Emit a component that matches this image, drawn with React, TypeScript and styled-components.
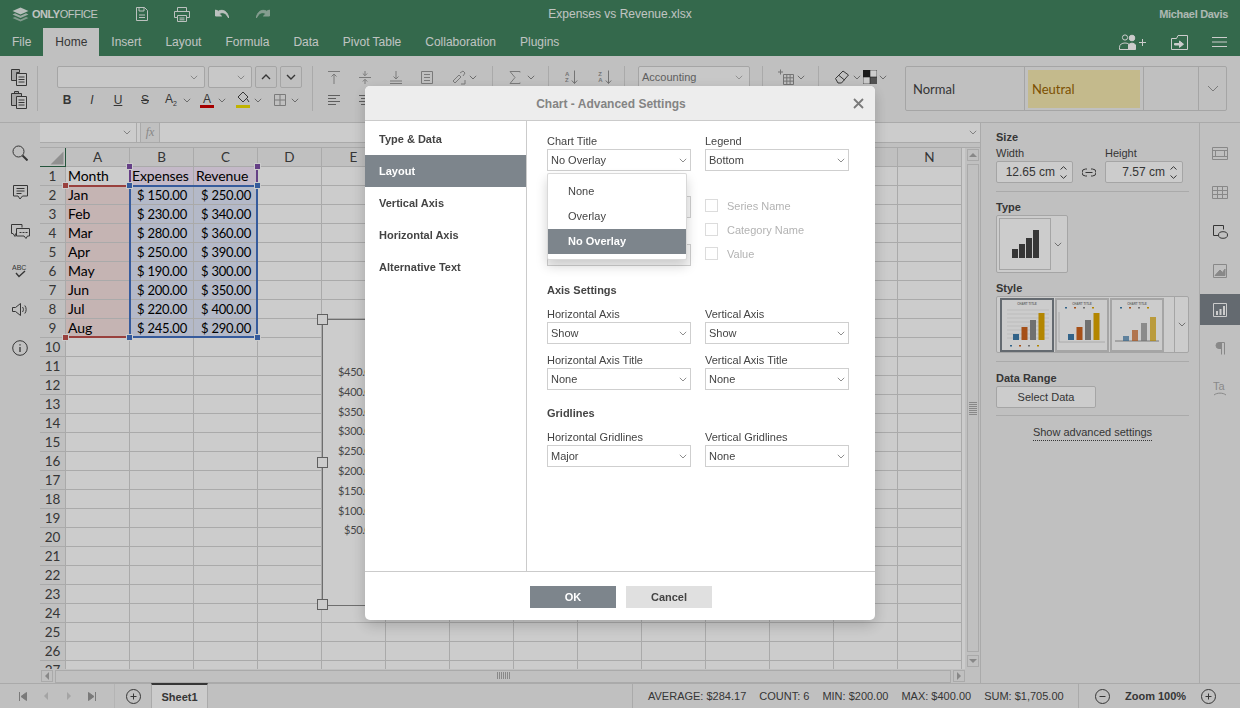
import React from "react";
import styled, { createGlobalStyle } from "styled-components";

const GlobalStyle = createGlobalStyle`
  html, body { margin: 0; padding: 0; height: 100%; overflow: hidden; }
  body { font-family: "Liberation Sans", Arial, sans-serif; font-size: 11px; color: #444; }
  * { box-sizing: border-box; }
`;

const GREEN = "#41845f";
const PANEL = "#f1f1f1";
const LINE = "#d5d5d5";
const ACCENT = "#7d858c";

const Page = styled.div`
  width: 1240px;
  height: 708px;
  display: flex;
  flex-direction: column;
  background: ${PANEL};
  overflow: hidden;
`;

/* ---------- icons ---------- */
const Svg = styled.svg<{ $o?: number }>`
  display: block;
  flex-shrink: 0;
  fill: none;
  stroke: currentColor;
  stroke-width: 1;
  opacity: ${(p) => p.$o ?? 1};
`;

const Ico = ({ w = 20, h = 20, o, children }: { w?: number; h?: number; o?: number; children: React.ReactNode }) => (
  <Svg width={w} height={h} viewBox={`0 0 ${w} ${h}`} $o={o}>
    {children}
  </Svg>
);

const Chev = ({ o }: { o?: number }) => (
  <Ico w={8} h={5} o={o}>
    <path d="M.8.8 4 4l3.2-3.2" />
  </Ico>
);

const Logo = () => (
  <Ico w={17} h={15}>
    <path d="M8.5.5 16.5 4l-8 3.5L.5 4z" fill="#fff" stroke="none" opacity=".95" />
    <path d="M3 6.3.5 7.5l8 3.6 8-3.6L14 6.3 8.5 8.8z" fill="#fff" stroke="none" opacity=".75" />
    <path d="M3 9.9.5 11l8 3.6 8-3.6-2.5-1.1-5.5 2.5z" fill="#fff" stroke="none" opacity=".55" />
  </Ico>
);

const SaveIcon = () => (
  <Ico w={14} h={14}>
    <path d="M1.5.5h8l3 3v10h-11z" />
    <path d="M4 .5v3.5h5V.5M4 8h6M4 10.5h6" />
  </Ico>
);
const PrintIcon = () => (
  <Ico w={16} h={15}>
    <path d="M3.5 4.5v-4h9v4M3.5 10.5h-3v-6h15v6h-3" />
    <path d="M3.5 8.5h9v6h-9zM5.5 11h5M5.5 12.8h5" />
  </Ico>
);
const UndoIcon = ({ flip, o }: { flip?: boolean; o?: number }) => (
  <Ico w={15} h={10} o={o}>
    <g transform={flip ? "translate(15 0) scale(-1 1)" : undefined}>
      <path d="M.5 1v6h6L4.2 4.8C7.5 2.5 11 3.6 13.6 9 13.2 3.6 8.6-.6 3.4 2.2z" fill="currentColor" />
    </g>
  </Ico>
);
const AddUserIcon = () => (
  <Ico w={28} h={16}>
    <circle cx="6" cy="3.5" r="2.6" />
    <path d="M.5 15.5v-2.2c0-3 2.6-4.3 5.5-4.3 1.5 0 2.8.3 3.8 1v5.5z" />
    <circle cx="13" cy="4" r="2.8" fill="currentColor" />
    <path d="M9.5 15.5V11c.8-1.2 2-1.8 3.5-1.8 1.5 0 2.7.6 3.5 1.8v4.5z" fill="currentColor" />
    <path d="M20 8.5h7M23.5 5v7" />
  </Ico>
);
const FolderIcon = () => (
  <Ico w={17} h={15}>
    <path d="M.5 3.5h5l1.5-3h9.5v14H.5z" />
    <path d="M3.5 8.5h5V6l4 3.2-4 3.2V10h-5z" fill="currentColor" />
  </Ico>
);
const MenuIcon = () => (
  <Ico w={15} h={12}>
    <path d="M0 1.5h15M0 6h15M0 10.5h15" />
  </Ico>
);

const CopyIcon = () => (
  <Ico w={16} h={17}>
    <path d="M.5.5h8v3h-3v8h-5z" fill="#cfcfcf" />
    <path d="M5.5 4.5h10v12h-10z" fill="#f1f1f1" />
    <path d="M7.5 8h6M7.5 10.5h6M7.5 13h6" />
  </Ico>
);
const PasteIcon = () => (
  <Ico w={16} h={18}>
    <path d="M.5 2.5h10v12H.5zM3.5 2.5v-2h4v2" fill="#cfcfcf" />
    <path d="M5.5 5.5h10v12h-10z" fill="#f1f1f1" />
    <path d="M7.5 9h6M7.5 11.5h6M7.5 14h6" />
  </Ico>
);
const LineIcon = ({ d, o = 0.5 }: { d: string; o?: number }) => (
  <Ico w={16} h={15} o={o}>
    <path d={d} />
  </Ico>
);
const SortWrap = styled.div`
  display: flex;
  align-items: center;
  gap: 2px;
  opacity: 0.55;
`;
const SortText = styled.span`
  font-size: 6px;
  line-height: 6px;
  font-weight: bold;
`;
const SortIcon = ({ a, b }: { a: string; b: string }) => (
  <SortWrap>
    <SortText>
      {a}
      <br />
      {b}
    </SortText>
    <Ico w={7} h={15}>
      <path d="M3.5.5v13M.8 10.5l2.7 3 2.700-3" />
    </Ico>
  </SortWrap>
);

/* ---------- header ---------- */
const Header = styled.header`
  background: ${GREEN};
  height: 56px;
  color: #fff;
  flex-shrink: 0;
`;
const TitleBar = styled.div`
  height: 28px;
  display: grid;
  grid-template-columns: 1fr auto 1fr;
  align-items: center;
  padding: 0 12px;
`;
const LeftTools = styled.div`
  display: flex;
  align-items: center;
`;
const Brand = styled.div`
  display: flex;
  align-items: center;
  gap: 3px;
  width: 86px;
  font-size: 11px;
  opacity: 0.92;
  letter-spacing: -0.45px;
`;
const BrandStrong = styled.b`
  font-weight: bold;
`;
const QuickTools = styled.div`
  display: flex;
  align-items: center;
  margin-left: 24px;
`;
const QuickTool = styled.div`
  width: 40px;
  height: 20px;
  display: flex;
  align-items: center;
  justify-content: center;
  opacity: 0.9;
`;
const DocTitle = styled.div`
  font-size: 12px;
  text-align: center;
  opacity: 0.92;
`;
const UserName = styled.div`
  justify-self: end;
  font-size: 11px;
  font-weight: bold;
  letter-spacing: -0.3px;
  opacity: 0.8;
`;
const TabBar = styled.nav`
  height: 28px;
  display: flex;
  align-items: stretch;
`;
const Tab = styled.div<{ $active?: boolean }>`
  padding: 0 12px;
  display: flex;
  align-items: center;
  font-size: 12px;
  color: ${(p) => (p.$active ? "#444" : "#fff")};
  background: ${(p) => (p.$active ? PANEL : "transparent")};
  opacity: ${(p) => (p.$active ? 1 : 0.92)};
`;
const TabActions = styled.div`
  margin-left: auto;
  display: flex;
  align-items: center;
  gap: 24px;
  padding-right: 13px;
`;

/* ---------- toolbar ---------- */
const Toolbar = styled.div`
  height: 67px;
  flex-shrink: 0;
  background: ${PANEL};
  border-bottom: 1px solid ${LINE};
  display: flex;
  padding-top: 10px;
  color: #444;
`;
const ToolGroup = styled.div<{ $w: number; $pad?: number; $last?: boolean }>`
  width: ${(p) => p.$w}px;
  height: 45px;
  padding-left: ${(p) => p.$pad ?? 0}px;
  border-right: ${(p) => (p.$last ? "none" : `1px solid ${LINE}`)};
  display: flex;
  flex-direction: column;
  justify-content: space-between;
  flex-shrink: 0;
`;
const ToolRow = styled.div<{ $gap?: number; $center?: boolean }>`
  height: 22px;
  display: flex;
  align-items: center;
  gap: ${(p) => p.$gap ?? 0}px;
  justify-content: ${(p) => (p.$center ? "center" : "flex-start")};
`;
const ToolBtn = styled.div<{ $w?: number; $mr?: number; $ml?: number }>`
  width: ${(p) => p.$w ?? 20}px;
  margin-right: ${(p) => p.$mr ?? 0}px;
  margin-left: ${(p) => p.$ml ?? 0}px;
  height: 20px;
  display: flex;
  align-items: center;
  justify-content: center;
  flex-shrink: 0;
`;
const BarCombo = styled.div<{ $w: number; $mr?: number }>`
  width: ${(p) => p.$w}px;
  margin-right: ${(p) => p.$mr ?? 0}px;
  height: 22px;
  background: #fafafa;
  border: 1px solid #cfcfcf;
  border-radius: 2px;
  display: flex;
  align-items: center;
  justify-content: space-between;
  padding: 0 6px 0 3px;
  font-size: 11px;
  color: #777;
  flex-shrink: 0;
`;
const StepBtn = styled.div<{ $mr?: number }>`
  width: 22px;
  margin-right: ${(p) => p.$mr ?? 0}px;
  height: 22px;
  border: 1px solid #cfcfcf;
  border-radius: 2px;
  display: flex;
  align-items: center;
  justify-content: center;
  flex-shrink: 0;
`;
const GlyphB = styled.span<{ $i?: boolean; $u?: boolean; $s?: boolean }>`
  font-size: 12px;
  font-weight: ${(p) => (p.$i || p.$u || p.$s ? "normal" : "bold")};
  font-style: ${(p) => (p.$i ? "italic" : "normal")};
  text-decoration: ${(p) => (p.$u ? "underline" : p.$s ? "line-through" : "none")};
`;
const SubGlyph = styled.span`
  font-size: 12px;
`;
const Sub = styled.sub`
  font-size: 7px;
`;
const ColorGlyph = styled.span<{ $c: string }>`
  display: inline-block;
  width: 14px;
  text-align: center;
  line-height: 12px;
  font-size: 12px;
  border-bottom: 3px solid ${(p) => p.$c};
`;
const StyleGallery = styled.div`
  width: 322px;
  height: 45px;
  margin-left: 17px;
  border: 1px solid #cfcfcf;
  border-radius: 2px;
  display: grid;
  grid-template-columns: 119px 119px 55px 1fr;
  font-family: Lato, "Liberation Sans", sans-serif;
  font-size: 13px;
  flex-shrink: 0;
`;
const StyleCell = styled.div<{ $center?: boolean }>`
  border-right: 1px solid #cfcfcf;
  display: flex;
  align-items: center;
  justify-content: ${(p) => (p.$center ? "center" : "flex-start")};
  padding-left: ${(p) => (p.$center ? 0 : 7)}px;
  color: #444;
  &:last-child {
    border-right: none;
  }
`;
const NeutralChip = styled.div`
  flex: 1;
  height: 38px;
  margin: 0 3px 0 -4px;
  background: #f5e9b0;
  color: #9c6500;
  display: flex;
  align-items: center;
  padding-left: 4px;
`;

/* ---------- work area ---------- */
const Work = styled.div`
  flex: 1;
  display: flex;
  min-height: 0;
`;
const Rail = styled.aside<{ $right?: boolean }>`
  width: 40px;
  flex-shrink: 0;
  display: flex;
  flex-direction: column;
  align-items: center;
  padding-top: ${(p) => (p.$right ? 11 : 20)}px;
  gap: ${(p) => (p.$right ? 0 : 19)}px;
  background: ${PANEL};
`;
const RailBtn = styled.div<{ $active?: boolean; $off?: boolean }>`
  width: 100%;
  height: ${(p) => (p.$active ? 31 : 39)}px;
  margin: ${(p) => (p.$active ? "4px 0" : "0")};
  flex-shrink: 0;
  display: flex;
  align-items: center;
  justify-content: center;
  color: ${(p) => (p.$active ? "#fff" : "#444")};
  background: ${(p) => (p.$active ? ACCENT : "transparent")};
  opacity: ${(p) => (p.$off ? 0.4 : 1)};
`;
const LeftRailIcon = styled.div`
  height: 20px;
  display: flex;
  align-items: center;
  justify-content: center;
  color: #444;
`;
const Center = styled.main`
  width: 941px;
  display: flex;
  flex-direction: column;
  flex-shrink: 0;
  border-right: 1px solid ${LINE};
  background: #fff;
`;
const FormulaBar = styled.div`
  height: 20px;
  display: flex;
  border-bottom: 1px solid ${LINE};
  background: #fff;
`;
const NameBox = styled.div`
  width: 97px;
  display: flex;
  align-items: center;
  justify-content: flex-end;
  padding-right: 5px;
  color: #666;
  border-right: 1px solid ${LINE};
`;
const FxBox = styled.div`
  width: 20px;
  margin-left: 3px;
  background: ${PANEL};
  border: 1px solid ${LINE};
  border-width: 0 1px;
  display: flex;
  align-items: center;
  justify-content: center;
  font-family: "Liberation Serif", serif;
  font-style: italic;
  color: #aaa;
  font-size: 12px;
`;
const FormulaInput = styled.div`
  flex: 1;
  display: flex;
  align-items: center;
  justify-content: flex-end;
  padding-right: 3px;
  color: #666;
`;
const FormulaStrip = styled.div`
  height: 5px;
  background: ${PANEL};
  border-bottom: 1px solid ${LINE};
`;
const SheetRow = styled.div`
  height: 521px;
  display: flex;
`;
const Sheet = styled.div`
  position: relative;
  width: 926px;
  overflow: hidden;
  font-family: Lato, sans-serif;
  font-size: 14px;
  color: #000;
`;
const gridColumns = "26px repeat(14, 64px)";
const CellGrid = styled.div`
  display: grid;
  grid-template-columns: ${gridColumns};
  grid-auto-rows: 19px;
`;
const OverlayGrid = styled.div`
  position: absolute;
  left: 0;
  top: 0;
  display: grid;
  grid-template-columns: ${gridColumns};
  grid-template-rows: repeat(28, 19px);
`;
const Cell = styled.div<{ $bg?: string; $right?: boolean }>`
  border-right: 1px solid ${LINE};
  border-bottom: 1px solid ${LINE};
  background: ${(p) => p.$bg ?? "#fff"};
  line-height: 18px;
  white-space: nowrap;
  overflow: hidden;
  letter-spacing: ${(p) => (p.$right ? "-0.2px" : "-0.1px")};
  font-size: ${(p) => (p.$right ? 13 : 14)}px;
  padding: ${(p) => (p.$right ? "0 6px 0 0" : "0 0 0 2px")};
  text-align: ${(p) => (p.$right ? "right" : "left")};
`;
const HeadCell = styled.div`
  border-right: 1px solid ${LINE};
  border-bottom: 1px solid ${LINE};
  background: ${PANEL};
  line-height: 18px;
  font-size: 13.5px;
  text-align: center;
  color: #444;
`;
const Corner = styled.div`
  background: ${PANEL};
  border-right: 1px solid #2f6b4c;
  border-bottom: 1px solid #2f6b4c;
  display: flex;
  align-items: flex-end;
  justify-content: flex-end;
  padding: 0 1px 1px 0;
`;
const Range = styled.div<{ $col: string; $row: string; $c: string; $noSides?: boolean }>`
  grid-column: ${(p) => p.$col};
  grid-row: ${(p) => p.$row};
  position: relative;
  margin: -1px 0 0 -1px;
  border: 2px solid ${(p) => p.$c};
  border-left-color: ${(p) => (p.$noSides ? "transparent" : p.$c)};
  border-right-color: ${(p) => (p.$noSides ? "transparent" : p.$c)};
`;
const RangeTop = styled(Range)`
  border-top-color: transparent;
  border-bottom-color: transparent;
`;
const Dot = styled.span<{ $c: string; $x: "l" | "r"; $y: "t" | "b" }>`
  position: absolute;
  width: 7px;
  height: 7px;
  background: ${(p) => p.$c};
  border: 1px solid #fff;
  ${(p) => (p.$x === "l" ? "left: -5px;" : "right: -5px;")}
  ${(p) => (p.$y === "t" ? "top: -5px;" : "bottom: -5px;")}
`;
const ChartFrame = styled.div`
  grid-column: 6 / 14;
  grid-row: 10 / 25;
  position: relative;
  background: #fff;
  border: 1px solid #8a8a8a;
  margin-bottom: -2px;
  display: flex;
  padding: 42px 0 0 15px;
`;
const AxisLabels = styled.div`
  display: flex;
  flex-direction: column;
  align-items: flex-end;
  font-size: 11px;
  letter-spacing: -0.3px;
  color: #595959;
`;
const AxisLabel = styled.div`
  height: 19.8px;
  line-height: 19.8px;
`;
const Grip = styled.span<{ $y: string }>`
  position: absolute;
  left: -6px;
  top: ${(p) => p.$y};
  width: 11px;
  height: 11px;
  margin-top: -6px;
  background: #fff;
  border: 1px solid #777;
`;
const VScroll = styled.div`
  width: 15px;
  background: ${PANEL};
  display: flex;
  flex-direction: column;
  align-items: center;
  padding: 1px 0 2px;
  gap: 3px;
`;
const ScrollBtn = styled.div`
  width: 12px;
  height: 12px;
  border: 1px solid ${LINE};
  display: flex;
  align-items: center;
  justify-content: center;
  flex-shrink: 0;
`;
const VThumb = styled.div`
  flex: 1;
  width: 12px;
  border: 1px solid ${LINE};
  display: flex;
  align-items: center;
  justify-content: center;
`;
const HScroll = styled.div`
  height: 14px;
  background: ${PANEL};
  display: flex;
  align-items: center;
  gap: 2px;
  padding-left: 1px;
  padding-right: 15px;
`;
const HThumb = styled.div`
  flex: 1;
  height: 13px;
  padding-bottom: 1px;
  border: 1px solid ${LINE};
  display: flex;
  align-items: center;
  justify-content: center;
`;
const GripLines = styled.div<{ $v?: boolean }>`
  width: ${(p) => (p.$v ? 13 : 8)}px;
  height: ${(p) => (p.$v ? 7 : 13)}px;
  background: repeating-linear-gradient(
    ${(p) => (p.$v ? "90deg" : "0deg")},
    #aaa 0 1px,
    transparent 1px 2px
  );
`;
const Tri = styled.span<{ $dir: "u" | "d" | "l" | "r" }>`
  width: 0;
  height: 0;
  border: 4px solid transparent;
  ${(p) =>
    p.$dir === "u"
      ? "border-bottom-color: #aaa; border-top-width: 0;"
      : p.$dir === "d"
      ? "border-top-color: #aaa; border-bottom-width: 0;"
      : p.$dir === "l"
      ? "border-right-color: #aaa; border-left-width: 0;"
      : "border-left-color: #aaa; border-right-width: 0;"}
`;

/* ---------- right panel ---------- */
const SidePanel = styled.section`
  width: 219px;
  flex-shrink: 0;
  background: ${PANEL};
  border-right: 1px solid ${LINE};
  padding: 7px 10px 0 15px;
  color: #444;
`;
const PanelTitle = styled.div<{ $mt?: number }>`
  font-weight: bold;
  font-size: 11px;
  line-height: 14px;
  margin-top: ${(p) => p.$mt ?? 0}px;
`;
const SizeRow = styled.div`
  display: grid;
  grid-template-columns: 77px 32px 78px;
  margin-top: 2px;
`;
const SizeLabel = styled.div`
  line-height: 14px;
  margin-bottom: 1px;
`;
const Spinner = styled.div`
  height: 22px;
  background: #fff;
  border: 1px solid #cfcfcf;
  border-radius: 2px;
  display: flex;
  align-items: center;
  justify-content: flex-end;
  gap: 5px;
  padding-right: 5px;
  font-size: 12px;
`;
const SpinArrows = styled.div`
  display: flex;
  flex-direction: column;
  gap: 5px;
`;
const LinkBox = styled.div`
  display: flex;
  align-items: center;
  justify-content: center;
  padding-top: 16px;
`;
const Divider = styled.div<{ $mt: number; $mb: number }>`
  height: 1px;
  background: ${LINE};
  margin: ${(p) => p.$mt}px 0 ${(p) => p.$mb}px;
`;
const TypeBox = styled.div`
  width: 72px;
  height: 58px;
  margin-top: 1px;
  background: #fff;
  border: 1px solid #cfcfcf;
  border-radius: 2px;
  padding: 2px;
  display: flex;
  align-items: center;
`;
const TypeInner = styled.div`
  width: 52px;
  height: 52px;
  border: 1px solid #cfcfcf;
  display: flex;
  align-items: flex-end;
  justify-content: center;
  padding-bottom: 11px;
  gap: 1px;
`;
const TypeBar = styled.span<{ $h: number }>`
  width: 6px;
  height: ${(p) => p.$h}px;
  background: #444;
`;
const TypeCaret = styled.div`
  flex: 1;
  display: flex;
  justify-content: center;
`;
const StyleBox = styled.div`
  height: 57px;
  margin-top: 1px;
  background: #fff;
  border: 1px solid #cfcfcf;
  border-radius: 2px;
  display: flex;
  align-items: center;
  padding-left: 3px;
`;
const Thumb = styled.div<{ $on?: boolean }>`
  width: 54px;
  height: 54px;
  background: #fff;
  border: ${(p) => (p.$on ? `2px solid ${ACCENT}` : "2px solid #cfcfcf")};
  outline: ${(p) => (p.$on ? `1px solid ${ACCENT}` : "none")};
  outline-offset: -1px;
`;
const ThumbList = styled.div`
  flex: 1;
  display: flex;
  gap: 1px;
`;
const StyleCaret = styled.div`
  width: 14px;
  align-self: stretch;
  border-left: 1px solid #cfcfcf;
  display: flex;
  align-items: center;
  justify-content: center;
`;
const SelectData = styled.div`
  width: 100px;
  height: 22px;
  margin-top: 1px;
  background: #fff;
  border: 1px solid #cfcfcf;
  border-radius: 2px;
  display: flex;
  align-items: center;
  justify-content: center;
`;
const AdvancedLink = styled.div`
  text-align: center;
  padding-top: 1px;
`;
const AdvancedText = styled.span`
  display: inline-block;
  line-height: 15px;
  border-bottom: 1px dotted #444;
`;

/* ---------- status bar ---------- */
const StatusBar = styled.footer`
  height: 25px;
  flex-shrink: 0;
  background: ${PANEL};
  border-top: 1px solid ${LINE};
  display: flex;
  align-items: stretch;
  color: #444;
`;
const SheetNav = styled.div`
  width: 115px;
  border-right: 1px solid ${LINE};
  display: grid;
  grid-template-columns: repeat(4, 23px);
  padding-left: 11px;
  align-items: center;
  justify-items: center;
  opacity: 0.5;
`;
const AddSheet = styled.div`
  width: 36px;
  display: flex;
  align-items: center;
  justify-content: center;
`;
const SheetTab = styled.div`
  width: 57px;
  margin-top: -1px;
  background: #fff;
  border-top: 2px solid #444;
  border-left: 1px solid ${LINE};
  border-right: 1px solid ${LINE};
  display: flex;
  align-items: center;
  justify-content: center;
  font-weight: bold;
`;
const Stats = styled.div`
  margin-left: auto;
  width: 447px;
  border-left: 1px solid ${LINE};
  border-right: 1px solid ${LINE};
  display: flex;
  align-items: center;
  gap: 13px;
  padding-left: 15px;
  font-size: 11px;
  white-space: nowrap;
`;
const ZoomBox = styled.div`
  width: 161px;
  display: flex;
  align-items: center;
  padding-left: 16px;
  gap: 15px;
  font-weight: bold;
`;

/* ---------- dialog ---------- */
const Scrim = styled.div`
  position: fixed;
  inset: 0;
  background: rgba(0, 0, 0, 0.2);
  display: flex;
  align-items: center;
  justify-content: center;
  padding-bottom: 2px;
`;
const Dialog = styled.div`
  width: 510px;
  height: 534px;
  background: #fff;
  border-radius: 5px;
  box-shadow: 0 5px 15px rgba(0, 0, 0, 0.2);
  display: flex;
  flex-direction: column;
  overflow: hidden;
`;
const DialogHead = styled.div`
  height: 35px;
  flex-shrink: 0;
  background: #ededed;
  border-bottom: 1px solid #cbcbcb;
  display: flex;
  align-items: center;
  justify-content: center;
  position: relative;
  padding: 2px 18px 0 0;
  font-size: 12px;
  font-weight: bold;
  color: #848484;
`;
const CloseBtn = styled.div`
  position: absolute;
  right: 11px;
  top: 12px;
  color: #7a7a7a;
`;
const DialogBody = styled.div`
  flex: 1;
  display: flex;
  min-height: 0;
`;
const SideNav = styled.div`
  width: 162px;
  flex-shrink: 0;
  border-right: 1px solid #cbcbcb;
  padding-top: 2px;
`;
const NavItem = styled.div<{ $active?: boolean }>`
  height: 32px;
  padding-left: 14px;
  display: flex;
  align-items: center;
  font-weight: bold;
  font-size: 11px;
  background: ${(p) => (p.$active ? ACCENT : "transparent")};
  color: ${(p) => (p.$active ? "#fff" : "#444")};
`;
const Form = styled.div`
  flex: 1;
  padding: 13px 0 0 20px;
  position: relative;
`;
const FormGrid = styled.div<{ $mt?: number }>`
  display: grid;
  grid-template-columns: 144px 144px;
  column-gap: 14px;
  row-gap: 9px;
  margin-top: ${(p) => p.$mt ?? 0}px;
`;
const FieldStack = styled.div`
  display: flex;
  flex-direction: column;
  gap: 11px;
`;
const FieldLabel = styled.div`
  line-height: 14px;
  margin-bottom: 1px;
  color: #444;
`;
const SelectBox = styled.div<{ $off?: boolean }>`
  height: 22px;
  border: 1px solid #cfcfcf;
  background: ${(p) => (p.$off ? "#f7f7f7" : "#fff")};
  display: flex;
  align-items: center;
  justify-content: space-between;
  padding: 0 3px 0 3px;
  color: #444;
`;
const SectionTitle = styled.div<{ $mt: number }>`
  font-weight: bold;
  line-height: 14px;
  margin-top: ${(p) => p.$mt}px;
`;
const CheckColumn = styled.div`
  padding-top: 18px;
  display: flex;
  flex-direction: column;
  gap: 11px;
`;
const CheckRow = styled.div`
  height: 13px;
  display: flex;
  align-items: center;
  gap: 9px;
  color: #b3b3b3;
`;
const CheckBox = styled.span`
  width: 13px;
  height: 13px;
  border: 1px solid #dcdcdc;
`;
const Menu = styled.div`
  position: absolute;
  left: 20px;
  top: 52px;
  width: 140px;
  height: 87px;
  background: #fff;
  border: 1px solid rgba(0, 0, 0, 0.15);
  border-radius: 2px;
  box-shadow: 0 6px 12px rgba(0, 0, 0, 0.18);
  padding: 5px 0;
`;
const MenuItem = styled.div<{ $on?: boolean }>`
  height: 25px;
  padding: 0 0 2px 20px;
  display: flex;
  align-items: center;
  background: ${(p) => (p.$on ? ACCENT : "transparent")};
  color: ${(p) => (p.$on ? "#fff" : "#444")};
  font-weight: ${(p) => (p.$on ? "bold" : "normal")};
`;
const DialogFoot = styled.div`
  height: 49px;
  flex-shrink: 0;
  border-top: 1px solid #cbcbcb;
  display: flex;
  justify-content: center;
  gap: 10px;
  padding: 14px 0 0 2px;
`;
const FootBtn = styled.div<{ $primary?: boolean }>`
  width: 86px;
  height: 22px;
  display: flex;
  align-items: center;
  justify-content: center;
  font-weight: bold;
  background: ${(p) => (p.$primary ? ACCENT : "#e0e0e0")};
  color: ${(p) => (p.$primary ? "#fff" : "#444")};
`;

/* ---------- data ---------- */
const TABS = ["Insert", "Layout", "Formula", "Data", "Pivot Table", "Collaboration", "Plugins"];
const COLS = ["A", "B", "C", "D", "E", "F", "G", "H", "I", "J", "K", "L", "M", "N"];
const ROWS: [string, string, string][] = [
  ["Jan", "$ 150.00", "$ 250.00"],
  ["Feb", "$ 230.00", "$ 340.00"],
  ["Mar", "$ 280.00", "$ 360.00"],
  ["Apr", "$ 250.00", "$ 390.00"],
  ["May", "$ 190.00", "$ 300.00"],
  ["Jun", "$ 200.00", "$ 350.00"],
  ["Jul", "$ 220.00", "$ 400.00"],
  ["Aug", "$ 245.00", "$ 290.00"],
];
const RED_TINT = "#f7e1e0";
const BLUE_TINT = "#e1e8fa";
const PURPLE_TINT = "#f5e8fa";
const AXIS = ["$450.00", "$400.00", "$350.00", "$300.00", "$250.00", "$200.00", "$150.00", "$100.00", "$50.00"];

function renderRow(r: number) {
  const items: React.ReactNode[] = [<HeadCell key="h">{r}</HeadCell>];
  COLS.forEach((_, c) => {
    let text = "";
    let bg: string | undefined;
    let right = false;
    if (r === 1 && c < 3) {
      text = ["Month", "Expenses", "Revenue"][c];
      if (c > 0) bg = PURPLE_TINT;
    } else if (r >= 2 && r <= 9 && c < 3) {
      text = ROWS[r - 2][c];
      bg = c === 0 ? RED_TINT : BLUE_TINT;
      right = c > 0;
    }
    items.push(
      <Cell key={c} $bg={bg} $right={right}>
        {text}
      </Cell>
    );
  });
  return <React.Fragment key={r}>{items}</React.Fragment>;
}

const SERIES = ["#3f7cac", "#d0651f", "#8c8c8c", "#e0a800"];
const ChartThumb = ({ variant }: { variant: 0 | 1 | 2 }) => {
  const heights = variant === 2 ? [5, 11, 18, 24] : [6, 13, 20, 27];
  const base = variant === 2 ? 41 : 40;
  return (
    <svg width="50" height="50" viewBox="0 0 50 50" style={{ display: "block" }}>
      <text x="25" y="4.5" fontSize="3" fontWeight="bold" textAnchor="middle" fill="#888" fontFamily="Liberation Sans">
        CHART TITLE
      </text>
      {variant === 0 &&
        [10, 14, 18, 22, 26, 30, 34, 38].map((y) => <line key={y} x1="5" x2="47" y1={y} y2={y} stroke="#ddd" strokeWidth=".6" />)}
      {variant === 1 && <path d="M2 12v30h46" fill="none" stroke="#ccc" strokeWidth=".8" />}
      {variant === 2 && <line x1="3" x2="47" y1="41" y2="41" stroke="#555" strokeWidth=".6" />}
      {variant !== 0 &&
        SERIES.map((c, i) => <rect key={c} x={8 + i * 9} y="7" width="2" height="1.5" fill={c} />)}
      {heights.map((h, i) => (
        <rect key={i} x={variant === 2 ? 11 + i * 9 : 11 + i * 8.5} y={base - h} width={6} height={h} fill={SERIES[i]} opacity={variant === 2 ? 0.7 : 1} />
      ))}
      {variant === 0 && SERIES.map((c, i) => <rect key={c} x={8 + i * 9} y="45" width="2" height="1.5" fill={c} />)}
    </svg>
  );
};

export default function App() {
  return (
    <>
      <GlobalStyle />
      <Page>
        <Header>
          <TitleBar>
            <LeftTools>
              <Brand>
                <Logo />
                <span>
                  <BrandStrong>ONLY</BrandStrong>OFFICE
                </span>
              </Brand>
              <QuickTools>
                <QuickTool><SaveIcon /></QuickTool>
                <QuickTool><PrintIcon /></QuickTool>
                <QuickTool><UndoIcon /></QuickTool>
                <QuickTool><UndoIcon flip o={0.6} /></QuickTool>
              </QuickTools>
            </LeftTools>
            <DocTitle>Expenses vs Revenue.xlsx</DocTitle>
            <UserName>Michael Davis</UserName>
          </TitleBar>
          <TabBar>
            <Tab>File</Tab>
            <Tab $active>Home</Tab>
            {TABS.map((t) => (
              <Tab key={t}>{t}</Tab>
            ))}
            <TabActions>
              <AddUserIcon />
              <FolderIcon />
              <MenuIcon />
            </TabActions>
          </TabBar>
        </Header>

        <Toolbar>
          <ToolGroup $w={38}>
            <ToolRow $center><CopyIcon /></ToolRow>
            <ToolRow $center><PasteIcon /></ToolRow>
          </ToolGroup>
          <ToolGroup $w={275} $pad={19}>
            <ToolRow>
              <BarCombo $w={148} $mr={3}><span /><Chev o={0.6} /></BarCombo>
              <BarCombo $w={44} $mr={3}><span /><Chev o={0.6} /></BarCombo>
              <StepBtn $mr={3}>
                <Ico w={10} h={6}><path d="M1 5l4-4 4 4" strokeWidth="1.4" /></Ico>
              </StepBtn>
              <StepBtn>
                <Ico w={10} h={6}><path d="M1 1l4 4 4-4" strokeWidth="1.4" /></Ico>
              </StepBtn>
            </ToolRow>
            <ToolRow>
              <ToolBtn $mr={5}><GlyphB>B</GlyphB></ToolBtn>
              <ToolBtn $mr={6}><GlyphB $i>I</GlyphB></ToolBtn>
              <ToolBtn $mr={7}><GlyphB $u>U</GlyphB></ToolBtn>
              <ToolBtn $mr={6}><GlyphB $s>S</GlyphB></ToolBtn>
              <ToolBtn $mr={1}><SubGlyph>A<Sub>2</Sub></SubGlyph></ToolBtn>
              <ToolBtn $w={10} $mr={5}><Chev o={0.6} /></ToolBtn>
              <ToolBtn><ColorGlyph $c="#d00000">A</ColorGlyph></ToolBtn>
              <ToolBtn $w={10} $mr={6}><Chev o={0.6} /></ToolBtn>
              <ToolBtn>
                <Ico w={16} h={18}>
                  <path d="M3 6l5-5 5 5-5 5zM12 8l2 3" />
                  <rect x="1" y="14" width="14" height="3" fill="#f0e000" stroke="none" />
                </Ico>
              </ToolBtn>
              <ToolBtn $w={10} $mr={7}><Chev o={0.6} /></ToolBtn>
              <ToolBtn>
                <LineIcon d="M2.5 1.5h11v11h-11zM8 1.5v11M2.5 7h11" />
              </ToolBtn>
              <ToolBtn $w={10}><Chev o={0.6} /></ToolBtn>
            </ToolRow>
          </ToolGroup>
          <ToolGroup $w={180} $pad={11}>
            <ToolRow $gap={11}>
              <ToolBtn><LineIcon d="M2 1.5h12M8 14V4M5.5 6.5 8 4l2.5 2.5" /></ToolBtn>
              <ToolBtn><LineIcon d="M2 7.5h12M8 1v4.5M5.8 3.5 8 5.7l2.2-2.2M8 14V9.5M5.8 11.5 8 9.3l2.2 2.2" /></ToolBtn>
              <ToolBtn><LineIcon d="M2 13.5h12M2 11h12M8 1v8M5.5 6.5 8 9l2.5-2.5" /></ToolBtn>
              <ToolBtn><LineIcon d="M2.5 1.5h11v12h-11zM5 4.5h6M5 7.5h6M5 10.5h6" /></ToolBtn>
              <ToolBtn $ml={1}><LineIcon d="M2 11 8 5l2 2-6 6zM9 3l3-2 2 2-2 3M14 10v4h-4" /></ToolBtn>
              <ToolBtn $w={8} $ml={-11}><Chev o={0.6} /></ToolBtn>
            </ToolRow>
            <ToolRow $gap={11}>
              <ToolBtn><LineIcon d="M2 2.5h12M2 5.5h8M2 8.5h12M2 11.5h8" o={0.7} /></ToolBtn>
              <ToolBtn><LineIcon d="M2 2.5h12M4 5.5h8M2 8.5h12M4 11.5h8" o={0.7} /></ToolBtn>
            </ToolRow>
          </ToolGroup>
          <ToolGroup $w={56} $pad={12}>
            <ToolRow>
              <ToolBtn>
                <LineIcon d="M13 2.5V1.5H3L8 7.5l-5 6h10v-1" />
              </ToolBtn>
              <ToolBtn $w={12}><Chev o={0.6} /></ToolBtn>
            </ToolRow>
          </ToolGroup>
          <ToolGroup $w={76} $pad={16}>
            <ToolRow $gap={20}>
              <SortIcon a="A" b="Z" />
              <SortIcon a="Z" b="A" />
            </ToolRow>
          </ToolGroup>
          <ToolGroup $w={138} $pad={13}>
            <ToolRow>
              <BarCombo $w={112}>Accounting<Chev o={0.5} /></BarCombo>
            </ToolRow>
          </ToolGroup>
          <ToolGroup $w={56} $pad={13}>
            <ToolRow>
              <ToolBtn>
                <Ico w={16} h={16} o={0.55}>
                  <path d="M5.5 5.5h10v10h-10zM5.5 8.8h10M5.5 12.1h10M8.8 5.5v10M12.1 5.5v10M0 3h5M2.5.5v5" />
                </Ico>
              </ToolBtn>
              <ToolBtn $w={10}><Chev o={0.6} /></ToolBtn>
            </ToolRow>
          </ToolGroup>
          <ToolGroup $w={69} $pad={13} $last>
            <ToolRow>
              <ToolBtn>
                <Ico w={16} h={16}>
                  <path d="M1.5 9.5 9 2l5.5 4-7 8H4z" />
                  <path d="M5 6.5 10.5 11" />
                </Ico>
              </ToolBtn>
              <ToolBtn $w={10}><Chev o={0.6} /></ToolBtn>
              <ToolBtn $w={16}>
                <Ico w={14} h={14}>
                  <path d="M0 0h7v7H0z" fill="#222" stroke="none" />
                  <path d="M7 7h7v7H7z" fill="#666" stroke="none" />
                  <path d="M7 0h7v7H7zM0 7h7v7H0z" fill="#fff" stroke="#222" strokeWidth=".6" />
                </Ico>
              </ToolBtn>
              <ToolBtn $w={10}><Chev o={0.6} /></ToolBtn>
            </ToolRow>
          </ToolGroup>
          <StyleGallery>
            <StyleCell>Normal</StyleCell>
            <StyleCell><NeutralChip>Neutral</NeutralChip></StyleCell>
            <StyleCell />
            <StyleCell $center>
              <Ico w={12} h={7} o={0.5}><path d="M1 1l5 5 5-5" /></Ico>
            </StyleCell>
          </StyleGallery>
        </Toolbar>

        <Work>
          <Rail>
            <LeftRailIcon>
              <Ico w={16} h={16}>
                <circle cx="6.5" cy="6.5" r="5.5" />
                <path d="m10.5 10.5 5 5" strokeWidth="2" />
              </Ico>
            </LeftRailIcon>
            <LeftRailIcon>
              <Ico w={15} h={15}>
                <path d="M.5.5h14V11H9.5L7 14l-2-3H.5z" />
                <path d="M3.5 3.5h8M3.5 6h8M3.5 8.5h5" />
              </Ico>
            </LeftRailIcon>
            <LeftRailIcon>
              <Ico w={19} h={15}>
                <path d="M11 3.5V.5H.5v9H2l2 3 .5-3" />
                <path d="M5.5 4.5h13V12h-2L15 14.5 13 12H5.5z" fill="#f1f1f1" />
                <path d="M8.5 8.5h2M11.5 8.5h2M14.500 8.5h2" />
              </Ico>
            </LeftRailIcon>
            <LeftRailIcon>
              <Ico w={16} h={15}>
                <text x="0" y="7" fontSize="7" fontFamily="Liberation Sans" stroke="none" fill="currentColor">ABC</text>
                <path d="m4 10 3 3.5L13 8" strokeWidth="1.4" />
              </Ico>
            </LeftRailIcon>
            <LeftRailIcon>
              <Ico w={16} h={13}>
                <path d="M.5 4.5h3l5-4v12l-5-4h-3z" />
                <path d="M10.5 4c1.2 1.5 1.2 3.5 0 5M12.8 2.5c1.8 2.3 1.8 5.7 0 8" />
              </Ico>
            </LeftRailIcon>
            <LeftRailIcon>
              <Ico w={16} h={16}>
                <circle cx="8" cy="8" r="7.3" />
                <path d="M8 7v5M8 4.2v1.3" strokeWidth="1.3" />
              </Ico>
            </LeftRailIcon>
          </Rail>

          <Center>
            <FormulaBar>
              <NameBox><Chev o={0.6} /></NameBox>
              <FxBox>fx</FxBox>
              <FormulaInput><Chev o={0.6} /></FormulaInput>
            </FormulaBar>
            <FormulaStrip />
            <SheetRow>
              <Sheet>
                <CellGrid>
                  <Corner>
                    <Ico w={14} h={14}>
                      <path d="M13.5.5v13H.5z" fill="#b5b5b5" stroke="none" />
                    </Ico>
                  </Corner>
                  {COLS.map((c) => (
                    <HeadCell key={c}>{c}</HeadCell>
                  ))}
                  {Array.from({ length: 27 }, (_, i) => renderRow(i + 1))}
                </CellGrid>
                <OverlayGrid>
                  <Range $col="2 / 3" $row="3 / 11" $c="#c0504d" $noSides>
                    <Dot $c="#c0504d" $x="l" $y="t" />
                    <Dot $c="#c0504d" $x="l" $y="b" />
                  </Range>
                  <RangeTop $col="3 / 5" $row="2 / 3" $c="#7f4fa8">
                    <Dot $c="#7f4fa8" $x="l" $y="t" />
                    <Dot $c="#7f4fa8" $x="r" $y="t" />
                  </RangeTop>
                  <Range $col="3 / 5" $row="3 / 11" $c="#4472c4">
                    <Dot $c="#4472c4" $x="l" $y="t" />
                    <Dot $c="#4472c4" $x="r" $y="t" />
                    <Dot $c="#4472c4" $x="l" $y="b" />
                    <Dot $c="#4472c4" $x="r" $y="b" />
                  </Range>
                  <ChartFrame>
                    <AxisLabels>
                      {AXIS.map((v) => (
                        <AxisLabel key={v}>{v}</AxisLabel>
                      ))}
                    </AxisLabels>
                    <Grip $y="0" />
                    <Grip $y="50%" />
                    <Grip $y="100%" />
                  </ChartFrame>
                </OverlayGrid>
              </Sheet>
              <VScroll>
                <ScrollBtn><Tri $dir="u" /></ScrollBtn>
                <VThumb><GripLines /></VThumb>
                <ScrollBtn><Tri $dir="d" /></ScrollBtn>
              </VScroll>
            </SheetRow>
            <HScroll>
              <ScrollBtn><Tri $dir="l" /></ScrollBtn>
              <HThumb><GripLines $v /></HThumb>
              <ScrollBtn><Tri $dir="r" /></ScrollBtn>
            </HScroll>
          </Center>

          <SidePanel>
            <PanelTitle>Size</PanelTitle>
            <SizeRow>
              <div>
                <SizeLabel>Width</SizeLabel>
                <Spinner>
                  12.65 cm
                  <SpinArrows>
                    <Ico w={7} h={4}><path d="M.5 3.5 3.5.7l3 2.8" /></Ico>
                    <Ico w={7} h={4}><path d="M.5.5l3 2.8 3-2.8" /></Ico>
                  </SpinArrows>
                </Spinner>
              </div>
              <LinkBox>
                <Ico w={14} h={9}>
                  <path d="M5 1H3.5a3.5 3.5 0 0 0 0 7H5M9 1h1.5a3.5 3.5 0 0 1 0 7H9M3.5 4.5h7" />
                </Ico>
              </LinkBox>
              <div>
                <SizeLabel>Height</SizeLabel>
                <Spinner>
                  7.57 cm
                  <SpinArrows>
                    <Ico w={7} h={4}><path d="M.5 3.5 3.5.7l3 2.8" /></Ico>
                    <Ico w={7} h={4}><path d="M.5.5l3 2.8 3-2.8" /></Ico>
                  </SpinArrows>
                </Spinner>
              </div>
            </SizeRow>
            <Divider $mt={8} $mb={8} />
            <PanelTitle>Type</PanelTitle>
            <TypeBox>
              <TypeInner>
                <TypeBar $h={9} />
                <TypeBar $h={14} />
                <TypeBar $h={20} />
                <TypeBar $h={28} />
              </TypeInner>
              <TypeCaret><Chev o={0.6} /></TypeCaret>
            </TypeBox>
            <PanelTitle $mt={8}>Style</PanelTitle>
            <StyleBox>
              <ThumbList>
                <Thumb $on><ChartThumb variant={0} /></Thumb>
                <Thumb><ChartThumb variant={1} /></Thumb>
                <Thumb><ChartThumb variant={2} /></Thumb>
              </ThumbList>
              <StyleCaret><Chev o={0.6} /></StyleCaret>
            </StyleBox>
            <Divider $mt={8} $mb={9} />
            <PanelTitle>Data Range</PanelTitle>
            <SelectData>Select Data</SelectData>
            <Divider $mt={7} $mb={8} />
            <AdvancedLink><AdvancedText>Show advanced settings</AdvancedText></AdvancedLink>
          </SidePanel>

          <Rail $right>
            <RailBtn $off>
              <Ico w={16} h={13}>
                <path d="M.5.5h15v12H.5zM.5 3.5h15M.5 9.5h15M3.5 3.5v6M12.5 3.5v6" />
              </Ico>
            </RailBtn>
            <RailBtn $off>
              <Ico w={16} h={13}>
                <path d="M.5.5h15v12H.5zM.5 4.5h15M.5 8.5h15M5.5.5v12M10.5.5v12" />
              </Ico>
            </RailBtn>
            <RailBtn>
              <Ico w={15} h={14}>
                <path d="M5 10.5H.5V.5h10v4" />
                <ellipse cx="10" cy="10" rx="4.5" ry="3.3" />
              </Ico>
            </RailBtn>
            <RailBtn $off>
              <Ico w={14} h={14}>
                <path d="M.5.5h13v13H.5z" />
                <path d="M2 11.5 7 6l2.5 2.5L12 5v6.5z" fill="currentColor" />
              </Ico>
            </RailBtn>
            <RailBtn $active>
              <Ico w={14} h={14}>
                <path d="M.5.5h13v13H.5z" />
                <path d="M3 8h2v4H3zM6.5 6h2v6h-2zM10 3h2v9h-2z" fill="currentColor" stroke="none" />
              </Ico>
            </RailBtn>
            <RailBtn $off>
              <Ico w={10} h={13}>
                <path d="M4 .5h5.5v12M6.5.5v12" />
                <path d="M4 .5a3 3 0 0 0 0 6h2.5v-6z" fill="currentColor" />
              </Ico>
            </RailBtn>
            <RailBtn $off>
              <Ico w={14} h={16}>
                <text x="0" y="10" fontSize="11" fontFamily="Liberation Sans" stroke="none" fill="currentColor">Ta</text>
                <path d="M1 15c3-2.5 9-2.5 12 0" />
              </Ico>
            </RailBtn>
          </Rail>
        </Work>

        <StatusBar>
          <SheetNav>
            <Ico w={8} h={9}><path d="M.5 0v9M7.5.5v8L2 4.5z" fill="currentColor" /></Ico>
            <Tri $dir="l" />
            <Tri $dir="r" />
            <Ico w={8} h={9}><path d="M7.5 0v9M.5.5v8L6 4.5z" fill="currentColor" /></Ico>
          </SheetNav>
          <AddSheet>
            <Ico w={15} h={15}>
              <circle cx="7.5" cy="7.5" r="7" />
              <path d="M4.5 7.5h6M7.5 4.5v6" />
            </Ico>
          </AddSheet>
          <SheetTab>Sheet1</SheetTab>
          <Stats>
            <span>AVERAGE: $284.17</span>
            <span>COUNT: 6</span>
            <span>MIN: $200.00</span>
            <span>MAX: $400.00</span>
            <span>SUM: $1,705.00</span>
          </Stats>
          <ZoomBox>
            <Ico w={15} h={15}>
              <circle cx="7.5" cy="7.5" r="7" />
              <path d="M4.5 7.5h6" />
            </Ico>
            Zoom 100%
            <Ico w={15} h={15}>
              <circle cx="7.5" cy="7.5" r="7" />
              <path d="M4.5 7.5h6M7.5 4.5v6" />
            </Ico>
          </ZoomBox>
        </StatusBar>
      </Page>

      <Scrim>
        <Dialog>
          <DialogHead>
            Chart - Advanced Settings
            <CloseBtn>
              <Ico w={11} h={11}><path d="M1 1l9 9M10 1l-9 9" strokeWidth="1.8" /></Ico>
            </CloseBtn>
          </DialogHead>
          <DialogBody>
            <SideNav>
              <NavItem>Type &amp; Data</NavItem>
              <NavItem $active>Layout</NavItem>
              <NavItem>Vertical Axis</NavItem>
              <NavItem>Horizontal Axis</NavItem>
              <NavItem>Alternative Text</NavItem>
            </SideNav>
            <Form>
              <FormGrid>
                <div>
                  <FieldLabel>Chart Title</FieldLabel>
                  <SelectBox>No Overlay<Chev o={0.6} /></SelectBox>
                </div>
                <div>
                  <FieldLabel>Legend</FieldLabel>
                  <SelectBox>Bottom<Chev o={0.6} /></SelectBox>
                </div>
              </FormGrid>
              <FormGrid $mt={10}>
                <FieldStack>
                  <div>
                    <FieldLabel>&nbsp;</FieldLabel>
                    <SelectBox $off />
                  </div>
                  <div>
                    <FieldLabel>&nbsp;</FieldLabel>
                    <SelectBox $off />
                  </div>
                </FieldStack>
                <CheckColumn>
                  <CheckRow><CheckBox />Series Name</CheckRow>
                  <CheckRow><CheckBox />Category Name</CheckRow>
                  <CheckRow><CheckBox />Value</CheckRow>
                </CheckColumn>
              </FormGrid>
              <SectionTitle $mt={17}>Axis Settings</SectionTitle>
              <FormGrid $mt={10}>
                <div>
                  <FieldLabel>Horizontal Axis</FieldLabel>
                  <SelectBox>Show<Chev o={0.6} /></SelectBox>
                </div>
                <div>
                  <FieldLabel>Vertical Axis</FieldLabel>
                  <SelectBox>Show<Chev o={0.6} /></SelectBox>
                </div>
                <div>
                  <FieldLabel>Horizontal Axis Title</FieldLabel>
                  <SelectBox>None<Chev o={0.6} /></SelectBox>
                </div>
                <div>
                  <FieldLabel>Vertical Axis Title</FieldLabel>
                  <SelectBox>None<Chev o={0.6} /></SelectBox>
                </div>
              </FormGrid>
              <SectionTitle $mt={16}>Gridlines</SectionTitle>
              <FormGrid $mt={10}>
                <div>
                  <FieldLabel>Horizontal Gridlines</FieldLabel>
                  <SelectBox>Major<Chev o={0.6} /></SelectBox>
                </div>
                <div>
                  <FieldLabel>Vertical Gridlines</FieldLabel>
                  <SelectBox>None<Chev o={0.6} /></SelectBox>
                </div>
              </FormGrid>
              <Menu>
                <MenuItem>None</MenuItem>
                <MenuItem>Overlay</MenuItem>
                <MenuItem $on>No Overlay</MenuItem>
              </Menu>
            </Form>
          </DialogBody>
          <DialogFoot>
            <FootBtn $primary>OK</FootBtn>
            <FootBtn>Cancel</FootBtn>
          </DialogFoot>
        </Dialog>
      </Scrim>
    </>
  );
}
